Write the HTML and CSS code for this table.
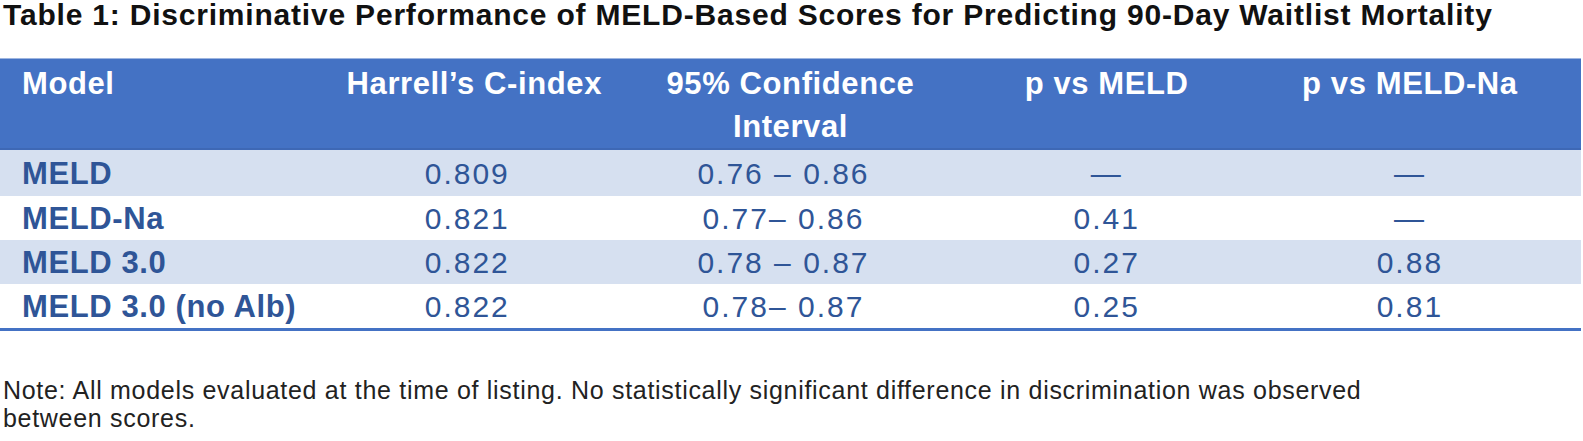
FILE: index.html
```html
<!DOCTYPE html>
<html lang="en">
<head>
<meta charset="utf-8">
<title>Table 1</title>
<link rel="stylesheet" href="styles.css">
</head>
<body>
<div class="page">
  <h1 class="title">Table 1: Discriminative Performance of MELD-Based Scores for Predicting 90-Day Waitlist Mortality</h1>
  <table class="tbl">
    <colgroup>
      <col class="c"><col class="c"><col class="c"><col class="c"><col class="c">
    </colgroup>
    <thead>
      <tr>
        <th class="first">Model</th>
        <th class="c2">Harrell’s C-index</th>
        <th class="c3">95% Confidence Interval</th>
        <th class="c4">p vs MELD</th>
        <th class="c5">p vs MELD-Na</th>
      </tr>
    </thead>
    <tbody>
      <tr class="band">
        <td class="first">MELD</td><td class="c2">0.809</td><td class="c3">0.76 – 0.86</td><td class="c4">—</td><td class="c5">—</td>
      </tr>
      <tr>
        <td class="first">MELD-Na</td><td class="c2">0.821</td><td class="c3">0.77– 0.86</td><td class="c4">0.41</td><td class="c5">—</td>
      </tr>
      <tr class="band">
        <td class="first">MELD 3.0</td><td class="c2">0.822</td><td class="c3">0.78 – 0.87</td><td class="c4">0.27</td><td class="c5">0.88</td>
      </tr>
      <tr class="last">
        <td class="first">MELD 3.0 (no Alb)</td><td class="c2">0.822</td><td class="c3">0.78– 0.87</td><td class="c4">0.25</td><td class="c5">0.81</td>
      </tr>
    </tbody>
  </table>
  <p class="note">Note: All models evaluated at the time of listing. No statistically significant difference in discrimination was observed between scores.</p>
</div>
</body>
</html>
```

FILE: styles.css
```css
html, body {
  margin: 0;
  padding: 0;
  background: #ffffff;
}

.page {
  width: 1583px;
  font-family: "Liberation Sans", Arial, sans-serif;
}

.title {
  margin: 0;
  padding: 0 0 0 3px;
  font-size: 30px;
  line-height: 30px;
  letter-spacing: 0.8px;
  font-weight: 700;
  color: #111111;
  white-space: nowrap;
}

.tbl {
  margin-top: 28px;
  width: 1581px;
  border-collapse: collapse;
  table-layout: fixed;
}

.tbl th {
  background: #4472c4;
  color: #ffffff;
  font-size: 31px;
  font-weight: 700;
  letter-spacing: 0.6px;
  line-height: 43px;
  padding: 3px 18px 0 18px;
  text-align: center;
  vertical-align: top;
  border-top: 1px solid #9db5e0;
  border-bottom: 2px solid #3e68b5;
}

.tbl td {
  font-size: 30px;
  letter-spacing: 2px;
  line-height: 42px;
  padding: 2px 18px 0 18px;
  color: #2f5597;
  text-align: center;
}

.tbl .first {
  text-align: left;
  padding-left: 22px;
}

.tbl td.first {
  font-size: 31px;
  font-weight: 700;
  letter-spacing: 0.6px;
}

.tbl td.c2,
.tbl td.c3 {
  padding-right: 32px;
}

.tbl .c5 {
  padding-right: 44px;
}

.tbl tr.band td {
  background: #d6e0f0;
}

.tbl tbody tr:first-child td {
  line-height: 44px;
}

.tbl tr.last td {
  border-bottom: 3px solid #4472c4;
}

.note {
  margin: 45px 0 0 0;
  padding-left: 3px;
  width: 1400px;
  font-size: 25px;
  letter-spacing: 0.7px;
  line-height: 28px;
  color: #222222;
}
```
